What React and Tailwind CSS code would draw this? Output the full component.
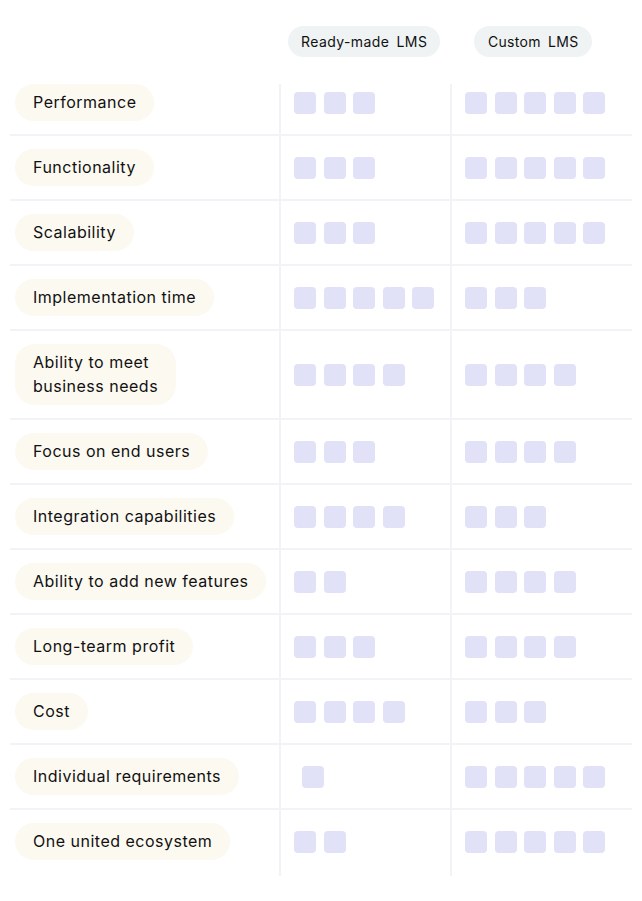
import React from 'react';

const rows = [
  { label: 'Performance', ready: 3, custom: 5 },
  { label: 'Functionality', ready: 3, custom: 5 },
  { label: 'Scalability', ready: 3, custom: 5 },
  { label: 'Implementation time', ready: 5, custom: 3 },
  { label: ['Ability to meet', 'business needs'], ready: 4, custom: 4 },
  { label: 'Focus on end users', ready: 3, custom: 4 },
  { label: 'Integration capabilities', ready: 4, custom: 3 },
  { label: 'Ability to add new features', ready: 2, custom: 4 },
  { label: 'Long-tearm profit', ready: 3, custom: 4 },
  { label: 'Cost', ready: 4, custom: 3 },
  { label: 'Individual requirements', ready: 1, custom: 5, shift: true },
  { label: 'One united ecosystem', ready: 2, custom: 5 },
];

const Squares = ({ count, shift }) => (
  <div className={`flex gap-[7.5px] ${shift ? 'ml-[8px]' : ''}`}>
    {Array.from({ length: count }).map((_, i) => (
      <div key={i} className="w-[22px] h-[22px] rounded-[4px] bg-[#e1e1f8]" />
    ))}
  </div>
);

const App = () => {
  return (
    <div
      className="w-[642px] min-h-[901px] bg-white text-[#111111] pl-[10px] pt-[26px]"
      style={{ fontFamily: 'Inter, "Noto Sans", sans-serif' }}
    >
      {/* header */}
      <div className="grid grid-cols-[269px_171px_182px] mb-[27px]">
        <div />
        <div className="pl-[9px]">
          <span className="inline-flex items-center h-[31px] px-[13px] rounded-full bg-[#eff3f3] text-[14px] tracking-[0.4px] [word-spacing:3px]">
            Ready-made LMS
          </span>
        </div>
        <div className="pl-[24px]">
          <span className="inline-flex items-center h-[31px] px-[14px] rounded-full bg-[#eff3f3] text-[14px] tracking-[0.3px] [word-spacing:3px]">
            Custom LMS
          </span>
        </div>
      </div>

      {/* rows */}
      <div className="w-[622px]">
        {rows.map((row, i) => {
          const first = i === 0;
          const last = i === rows.length - 1;
          const pad = first ? 'pt-0 pb-[13px]' : last ? 'pt-[13px] pb-[16px]' : 'py-[13px]';
          return (
            <div
              key={i}
              className={`grid grid-cols-[269px_171px_182px] ${last ? '' : 'border-b-2 border-[#f2f2f7]'}`}
            >
              <div className={`flex items-center pl-[5px] ${pad}`}>
                <span className="inline-block px-[18px] pt-[5.5px] pb-[7.5px] rounded-[20px] bg-[#fcf9f1] text-[16px] leading-[24px] tracking-[0.5px]">
                  {Array.isArray(row.label) ? (
                    <>
                      {row.label[0]}
                      <br />
                      {row.label[1]}
                    </>
                  ) : (
                    row.label
                  )}
                </span>
              </div>
              <div className={`flex items-center pl-[13px] border-l-2 border-[#f2f2f7] ${pad}`}>
                <Squares count={row.ready} shift={row.shift} />
              </div>
              <div className={`flex items-center pl-[13px] border-l-2 border-[#f2f2f7] ${pad}`}>
                <Squares count={row.custom} />
              </div>
            </div>
          );
        })}
      </div>
    </div>
  );
};

export default App;
